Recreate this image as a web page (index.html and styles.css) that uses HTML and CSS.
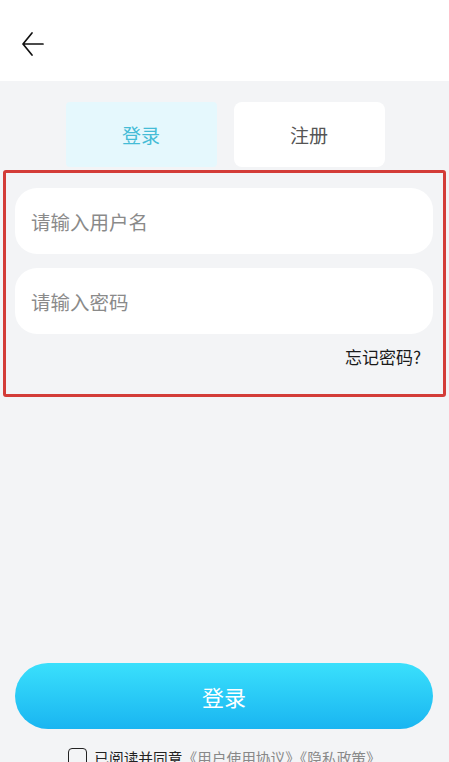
FILE: index.html
```html
<!DOCTYPE html>
<html lang="zh-CN">
<head>
  <meta charset="UTF-8">
  <title>登录</title>
  <link rel="stylesheet" href="styles.css">
</head>
<body>
  <div class="page">
    <div class="header">
      <svg class="back" width="24" height="26" viewBox="0 0 24 26">
        <path d="M22 13 H2 M11 2 L2 13 L11 24" fill="none" stroke="#111" stroke-width="1.7" stroke-linecap="round" stroke-linejoin="round"/>
      </svg>
    </div>

    <div class="content">
      <div class="tabs">
        <div class="tab active">登录</div>
        <div class="tab">注册</div>
      </div>

      <div class="form-box">
        <div class="field">请输入用户名</div>
        <div class="field">请输入密码</div>
        <div class="forgot">忘记密码?</div>
      </div>

      <button class="submit" type="button">登录</button>

      <div class="agree">
        <span class="check"></span>
        <span>已阅读并同意</span><span class="link">《用户使用协议》《隐私政策》</span>
      </div>
    </div>
  </div>
</body>
</html>
```

FILE: styles.css
```css
body {
  margin: 0;
  padding: 0;
  font-family: "Noto Sans CJK SC", "Noto Sans", sans-serif;
  background: #f3f4f6;
  overflow: hidden;
}

.page {
  height: 100vh;
  display: flex;
  flex-direction: column;
}

.page > *,
.content > * {
  flex-shrink: 0;
}

.header {
  height: 81px;
  background: #fff;
  display: flex;
  align-items: center;
  padding-left: 21px;
}

.back {
  display: block;
  margin-top: 7px;
}

.content {
  flex: 1;
  display: flex;
  flex-direction: column;
}

.tabs {
  display: flex;
  justify-content: center;
  gap: 17px;
  padding-top: 21px;
  padding-left: 1px;
}

.tab {
  width: 151px;
  height: 65px;
  border-radius: 8px;
  background: #fff;
  color: #555;
  font-size: 19px;
  display: flex;
  align-items: center;
  justify-content: center;
}

.tab.active {
  background: #e5f8fd;
  color: #45bcd6;
  border-radius: 4px;
}

.form-box {
  margin: 3px 3px 0;
  border: 3px solid #d33c38;
  border-radius: 3px;
  padding: 15px 10px 25px 9px;
  display: flex;
  flex-direction: column;
  gap: 14px;
}

.field {
  height: 66px;
  border-radius: 22px;
  background: #fff;
  color: #8a8a8a;
  font-size: 19.5px;
  padding-left: 16px;
  display: flex;
  align-items: center;
}

.forgot {
  text-align: right;
  font-size: 17px;
  line-height: 24px;
  color: #1a1a1a;
  padding-right: 12px;
  margin-top: -3px;
}

.submit {
  margin: 266px 16px 0 15px;
  height: 66px;
  border: none;
  border-radius: 33px;
  background: linear-gradient(#3ae0fc, #19b5f1);
  color: #fff;
  font-family: inherit;
  font-size: 22px;
}

.agree {
  display: flex;
  align-items: center;
  justify-content: center;
  gap: 7px;
  margin-top: 18px;
  font-size: 14.7px;
  color: #222;
}

.check {
  width: 17px;
  height: 17px;
  border: 1.5px solid #222;
  border-radius: 4px;
}

.link {
  color: #888;
  margin-left: -7px;
}
```
